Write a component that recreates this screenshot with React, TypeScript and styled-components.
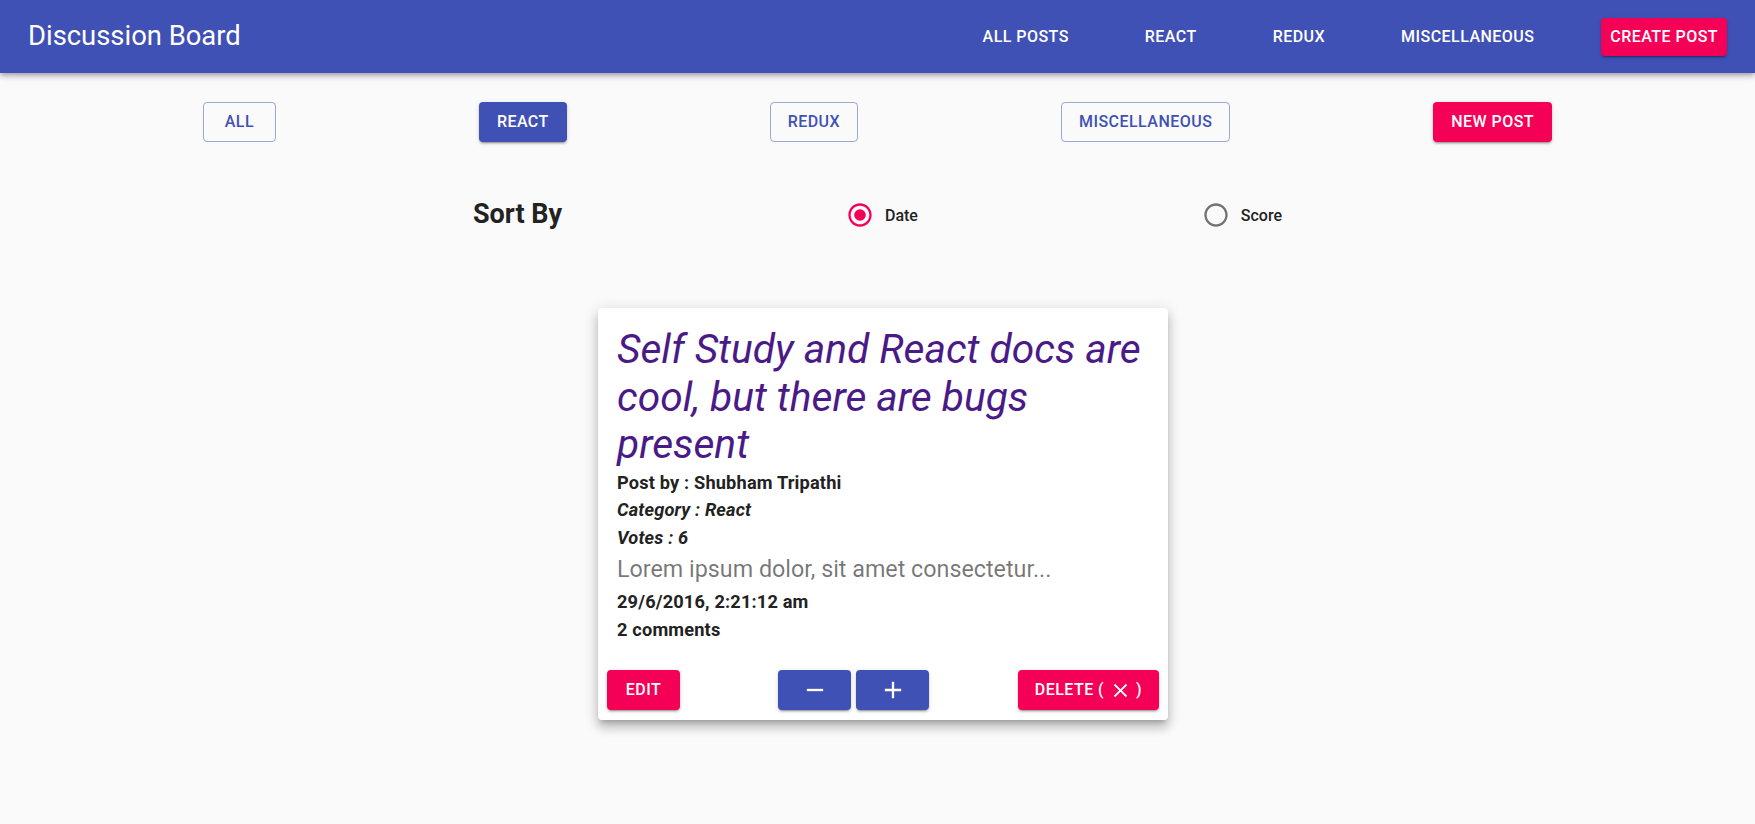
import React, { useState } from "react";
import styled, { createGlobalStyle, css } from "styled-components";

const PRIMARY = "#3f51b5";
const SECONDARY = "#f50057";

const GlobalStyle = createGlobalStyle`
  html, body {
    margin: 0;
    padding: 0;
    background: #fafafa;
    font-family: Roboto, "Noto Sans", "Liberation Sans", sans-serif;
    color: rgba(0, 0, 0, 0.87);
  }
  * { box-sizing: border-box; }
`;

const Page = styled.div`
  min-height: 824px;
  background: #fafafa;
`;

const AppBar = styled.header`
  height: 73px;
  background: ${PRIMARY};
  color: #fff;
  display: flex;
  align-items: center;
  justify-content: space-between;
  padding: 0 28px;
  box-shadow: 0px 2px 4px -1px rgba(0, 0, 0, 0.2),
    0px 4px 5px 0px rgba(0, 0, 0, 0.14), 0px 1px 10px 0px rgba(0, 0, 0, 0.12);
  position: relative;
  z-index: 2;
`;

const Title = styled.h1`
  margin: 0;
  font-size: 27.4px;
  font-weight: 400;
  line-height: 1.33;
  letter-spacing: 0;
`;

const Nav = styled.nav`
  display: flex;
  align-items: center;
  gap: 58px;
`;

const buttonBase = css`
  font-family: Roboto, "Noto Sans", sans-serif;
  font-size: 16px;
  font-weight: 500;
  line-height: 28px;
  letter-spacing: 0.457px;
  text-transform: uppercase;
  border-radius: 4px;
  cursor: pointer;
  display: inline-flex;
  align-items: center;
  justify-content: center;
  white-space: nowrap;
`;

const NavButton = styled.button<{ $accent?: boolean }>`
  ${buttonBase}
  border: none;
  padding: 5px 9px;
  color: #fff;
  background: ${(p) => (p.$accent ? SECONDARY : "transparent")};
  box-shadow: ${(p) =>
    p.$accent
      ? "0px 3px 1px -2px rgba(0,0,0,0.2), 0px 2px 2px 0px rgba(0,0,0,0.14), 0px 1px 5px 0px rgba(0,0,0,0.12)"
      : "none"};
`;

const FilterRow = styled.div`
  display: flex;
  justify-content: space-evenly;
  align-items: center;
  padding-top: 29px;
`;

const ActionButton = styled.button<{ $variant: "outlined" | "primary" | "secondary"; $tight?: boolean }>`
  ${buttonBase}
  min-width: 73px;
  height: 40px;
  padding: 0 ${(p) => (p.$tight ? 16 : 17)}px;
  ${(p) =>
    p.$variant === "outlined"
      ? css`
          background: transparent;
          color: ${PRIMARY};
          border: 1px solid rgba(63, 81, 181, 0.5);
        `
      : css`
          background: ${p.$variant === "primary" ? PRIMARY : SECONDARY};
          color: #fff;
          border: 1px solid transparent;
          box-shadow: 0px 3px 1px -2px rgba(0, 0, 0, 0.2),
            0px 2px 2px 0px rgba(0, 0, 0, 0.14),
            0px 1px 5px 0px rgba(0, 0, 0, 0.12);
        `}
`;

const SortRow = styled.div`
  width: 809px;
  height: 46px;
  margin: 50px auto 0;
  display: flex;
  align-items: center;
  justify-content: space-between;
`;

const SortTitle = styled.h2`
  margin: 0;
  font-size: 27px;
  font-weight: 700;
  color: #222;
  line-height: 1.3;
`;

const RadioLabel = styled.label`
  display: flex;
  align-items: center;
  gap: 11px;
  margin-left: 8px;
  cursor: pointer;
  font-size: 16px;
  font-weight: 500;
  color: #222;
`;

const RadioIcon = styled.span<{ $checked: boolean }>`
  width: 28px;
  height: 28px;
  display: inline-flex;
  color: ${(p) => (p.$checked ? SECONDARY : "rgba(0,0,0,0.54)")};
`;

const CardWrap = styled.div`
  display: flex;
  justify-content: center;
  padding-left: 11px;
  margin-top: 70px;
`;

const Card = styled.article`
  width: 570px;
  background: #fff;
  border-radius: 4px;
  box-shadow: 0px 5px 5px -3px rgba(0, 0, 0, 0.2),
    0px 8px 10px 1px rgba(0, 0, 0, 0.14), 0px 3px 14px 2px rgba(0, 0, 0, 0.12);
  overflow: hidden;
`;

const CardContent = styled.div`
  padding: 18px 18px 18px 19px;
`;

const PostTitle = styled.h3`
  margin: 0;
  font-size: 40.7px;
  font-style: italic;
  font-weight: 400;
  line-height: 47.6px;
  color: #4a1a87;
`;

const Meta = styled.p<{ $italic?: boolean }>`
  margin: 0;
  font-size: 18.2px;
  font-weight: 700;
  line-height: 27.5px;
  letter-spacing: 0.17px;
  color: #222;
  font-style: ${(p) => (p.$italic ? "italic" : "normal")};
`;

const Excerpt = styled.p`
  margin: 0;
  font-size: 23.3px;
  font-weight: 400;
  line-height: 37px;
  color: rgba(0, 0, 0, 0.54);
`;

const CardActions = styled.div`
  padding: 9px 9px 10px;
  display: flex;
  align-items: center;
  justify-content: space-between;
`;

const VoteGroup = styled.div`
  display: flex;
  gap: 5px;
  margin-left: 10px;
`;

const Icon = styled.svg<{ $size: number }>`
  width: ${(p) => p.$size}px;
  height: ${(p) => p.$size}px;
  fill: currentColor;
  display: block;
`;

const RadioSvg = ({ checked }: { checked: boolean }) => (
  <Icon $size={28} viewBox="0 0 24 24">
    <path d="M12 2C6.48 2 2 6.48 2 12s4.48 10 10 10 10-4.48 10-10S17.52 2 12 2zm0 18c-4.42 0-8-3.58-8-8s3.58-8 8-8 8 3.58 8 8-3.58 8-8 8z" />
    {checked && <circle cx="12" cy="12" r="5" />}
  </Icon>
);

const filters = [
  { label: "All", variant: "outlined" as const },
  { label: "React", variant: "primary" as const },
  { label: "Redux", variant: "outlined" as const },
  { label: "Miscellaneous", variant: "outlined" as const },
  { label: "New Post", variant: "secondary" as const },
];

export default function App() {
  const [sort, setSort] = useState<"date" | "score">("date");
  return (
    <Page>
      <GlobalStyle />
      <AppBar>
        <Title>Discussion Board</Title>
        <Nav>
          <NavButton>All Posts</NavButton>
          <NavButton>React</NavButton>
          <NavButton>Redux</NavButton>
          <NavButton>Miscellaneous</NavButton>
          <NavButton $accent>Create Post</NavButton>
        </Nav>
      </AppBar>

      <FilterRow>
        {filters.map((f) => (
          <ActionButton key={f.label} $variant={f.variant}>
            {f.label}
          </ActionButton>
        ))}
      </FilterRow>

      <SortRow>
        <SortTitle>Sort By</SortTitle>
        <RadioLabel onClick={() => setSort("date")}>
          <RadioIcon $checked={sort === "date"}>
            <RadioSvg checked={sort === "date"} />
          </RadioIcon>
          Date
        </RadioLabel>
        <RadioLabel onClick={() => setSort("score")}>
          <RadioIcon $checked={sort === "score"}>
            <RadioSvg checked={sort === "score"} />
          </RadioIcon>
          Score
        </RadioLabel>
      </SortRow>

      <CardWrap>
        <Card>
          <CardContent>
            <PostTitle>Self Study and React docs are cool, but there are bugs present</PostTitle>
            <Meta>Post by : Shubham Tripathi</Meta>
            <Meta $italic>Category : React</Meta>
            <Meta $italic>Votes : 6</Meta>
            <Excerpt>Lorem ipsum dolor, sit amet consectetur...</Excerpt>
            <Meta>29/6/2016, 2:21:12 am</Meta>
            <Meta>2 comments</Meta>
          </CardContent>
          <CardActions>
            <ActionButton $variant="secondary">Edit</ActionButton>
            <VoteGroup>
              <ActionButton $variant="primary" aria-label="down vote">
                <Icon $size={28} viewBox="0 0 24 24">
                  <path d="M19 13H5v-2h14v2z" />
                </Icon>
              </ActionButton>
              <ActionButton $variant="primary" aria-label="up vote">
                <Icon $size={28} viewBox="0 0 24 24">
                  <path d="M19 13h-6v6h-2v-6H5v-2h6V5h2v6h6v2z" />
                </Icon>
              </ActionButton>
            </VoteGroup>
            <ActionButton $variant="secondary" $tight>
              Delete (&nbsp;
              <Icon $size={23} viewBox="0 0 24 24">
                <path d="M19 6.41L17.59 5 12 10.59 6.41 5 5 6.41 10.59 12 5 17.59 6.41 19 12 13.41 17.59 19 19 17.59 13.41 12z" />
              </Icon>
              &nbsp;)
            </ActionButton>
          </CardActions>
        </Card>
      </CardWrap>
    </Page>
  );
}
